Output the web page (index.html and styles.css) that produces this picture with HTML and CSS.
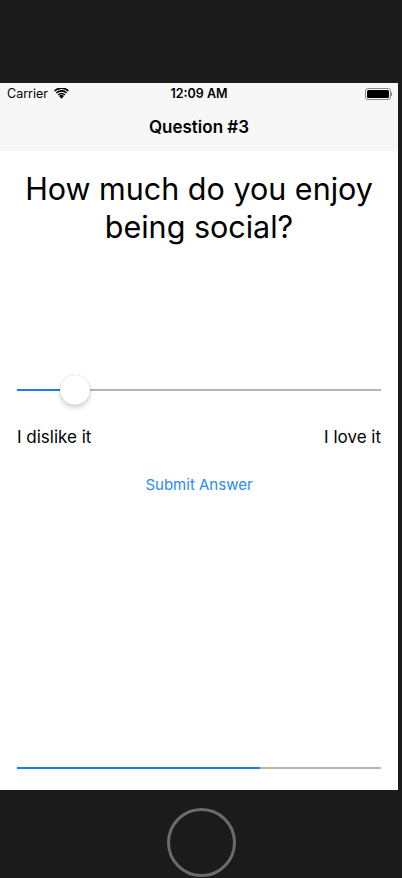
FILE: index.html
```html
<!DOCTYPE html>
<html>
<head>
<meta charset="utf-8">
<link rel="stylesheet" href="styles.css">
</head>
<body>
<div class="device">
  <div class="bezel-top"></div>
  <div class="screen">
    <div class="status">
      <div class="status-left">
        <span class="carrier">Carrier</span>
        <svg class="wifi" width="15" height="11" viewBox="0 0 14 10">
          <path d="M7 9.8 L4.7 7.3 A3.2 3.2 0 0 1 9.3 7.3 Z" fill="#000"/>
          <path d="M3.4 5.9 A5 5 0 0 1 10.6 5.9 L9.7 6.9 A3.7 3.7 0 0 0 4.3 6.9 Z" fill="#000"/>
          <path d="M1.7 4 A7.6 7.6 0 0 1 12.3 4 L11.3 5.1 A6.1 6.1 0 0 0 2.7 5.1 Z" fill="#000"/>
          <path d="M0 2.1 A10 10 0 0 1 14 2.1 L13 3.2 A8.6 8.6 0 0 0 1 3.2 Z" fill="#000"/>
        </svg>
      </div>
      <div class="time">12:09 AM</div>
      <div class="status-right">
        <div class="battery"><div class="battery-fill"></div></div>
        <div class="battery-nub"></div>
      </div>
    </div>
    <div class="nav">Question #3</div>
    <div class="content">
      <h1 class="question">How much do you enjoy being social?</h1>
      <div class="slider">
        <div class="track"></div>
        <div class="track-fill"></div>
        <div class="thumb"></div>
      </div>
      <div class="labels">
        <span>I dislike it</span>
        <span>I love it</span>
      </div>
      <div class="submit">Submit Answer</div>
      <div class="progress"><div class="progress-fill" style="width: 66.8%"></div></div>
    </div>
  </div>
  <div class="bezel-bottom">
    <div class="home"></div>
  </div>
</div>
</body>
</html>
```
FILE: styles.css
```css
* { box-sizing: border-box; }
html, body {
  margin: 0;
  padding: 0;
  background: #1b1b1b;
  font-family: "Inter", "Liberation Sans", Arial, sans-serif;
}
.device {
  width: 402px;
  height: 878px;
  display: flex;
  flex-direction: column;
  overflow: hidden;
}
.bezel-top { height: 83px; flex: none; }
.screen {
  width: 398px;
  height: 707px;
  flex: none;
  background: #fff;
  display: flex;
  flex-direction: column;
}
.status {
  height: 21px;
  background: #f7f7f7;
  display: flex;
  align-items: center;
  justify-content: space-between;
  padding: 0 6px 0 7px;
  position: relative;
  font-size: 12.5px;
  color: #000;
}
.status-left { display: flex; align-items: center; gap: 6px; }
.wifi { display: block; }
.time {
  position: absolute;
  left: 0; right: 0;
  text-align: center;
  font-weight: 600;
  pointer-events: none;
}
.status-right { display: flex; align-items: center; }
.battery {
  width: 26px;
  height: 12px;
  border: 1px solid #8a8a8a;
  border-radius: 3px;
  padding: 1px;
}
.battery-fill { width: 100%; height: 100%; background: #000; border-radius: 1.5px; }
.battery-nub { width: 1.5px; height: 4px; background: #8a8a8a; border-radius: 0 1px 1px 0; }
.nav {
  height: 47px;
  background: #f7f7f7;
  display: flex;
  align-items: center;
  justify-content: center;
  font-size: 17px;
  font-weight: 600;
  color: #000;
  padding-bottom: 2px;
}
.content {
  flex: 1;
  display: flex;
  flex-direction: column;
  padding: 0 17px 21px 17px;
}
.question {
  margin: 19px 0 0 0;
  font-weight: 400;
  font-size: 30.5px;
  line-height: 38px;
  text-align: center;
  color: #000;
  padding: 0;
}
.slider {
  position: relative;
  height: 30px;
  margin-top: 129px;
}
.track {
  position: absolute;
  left: 0; right: 0;
  top: 14px;
  height: 2px;
  background: #b5b5b5;
}
.track-fill {
  position: absolute;
  left: 0;
  top: 14px;
  width: 58px;
  height: 2px;
  background: #1a7df6;
}
.thumb {
  position: absolute;
  left: 43px;
  top: 0;
  width: 30px;
  height: 30px;
  border-radius: 50%;
  background: #fff;
  box-shadow: 0 3px 5px rgba(0,0,0,0.18), 0 0 1px rgba(0,0,0,0.25);
}
.labels {
  display: flex;
  justify-content: space-between;
  margin-top: 21px;
  font-size: 17px;
  line-height: 22px;
  color: #000;
}
.submit {
  align-self: center;
  margin-top: 27px;
  font-size: 15px;
  line-height: 20px;
  color: #2b8af7;
}
.progress {
  margin-top: auto;
  height: 2px;
  background: #b5b5b5;
}
.progress-fill { height: 100%; background: #1a7df6; }
.bezel-bottom {
  flex: 1;
  display: flex;
  justify-content: center;
  padding-top: 18px;
}
.home {
  width: 69px;
  height: 69px;
  border-radius: 50%;
  border: 3px solid #6b6b6b;
}
```
